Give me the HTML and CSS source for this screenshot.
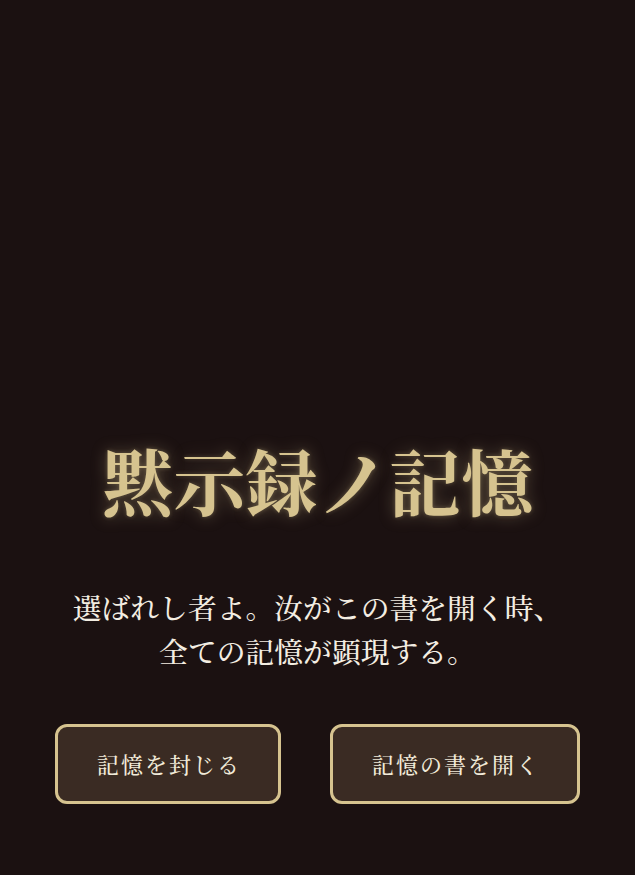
FILE: index.html
```html
<!DOCTYPE html>
<html lang="ja">
<head>
<meta charset="utf-8">
<title>黙示録ノ記憶</title>
<link rel="stylesheet" href="styles.css">
</head>
<body>
<main class="screen">
  <h1 class="title">黙示録ノ記憶</h1>
  <p class="lead">選ばれし者よ。汝がこの書を開く時、全ての記憶が顕現する。</p>
  <div class="actions">
    <button class="btn">記憶を封じる</button>
    <button class="btn">記憶の書を開く</button>
  </div>
</main>
</body>
</html>
```

FILE: styles.css
```css
html, body {
  margin: 0;
  padding: 0;
  background: #1b1111;
}
body {
  font-family: "Noto Serif CJK JP", "Noto Serif JP", "Liberation Serif", "Noto Sans CJK JP", serif;
}
.screen {
  box-sizing: border-box;
  height: 875px;
  display: flex;
  flex-direction: column;
  align-items: center;
  justify-content: flex-end;
  padding: 0 40px 71px;
}
.title {
  margin: 0 0 62px;
  font-size: 72px;
  font-weight: 700;
  line-height: 1.2;
  color: #d6c38f;
  text-shadow: 0 0 16px rgba(214, 195, 143, 0.35), 0 0 4px rgba(214, 195, 143, 0.3);
  text-align: center;
}
.lead {
  margin: 0 0 50px;
  max-width: 510px;
  font-size: 28.8px;
  font-weight: 500;
  line-height: 1.55;
  color: #f3ede2;
  text-align: center;
}
.actions {
  display: flex;
  gap: 49px;
}
.btn {
  font-family: inherit;
  font-size: 22px;
  font-weight: 500;
  letter-spacing: 2px;
  line-height: 34px;
  color: #f1ead9;
  background: #3a2b23;
  border: 3px solid #d6c38f;
  border-radius: 12px;
  padding: 20px 37px 20px 39px;
}
```
